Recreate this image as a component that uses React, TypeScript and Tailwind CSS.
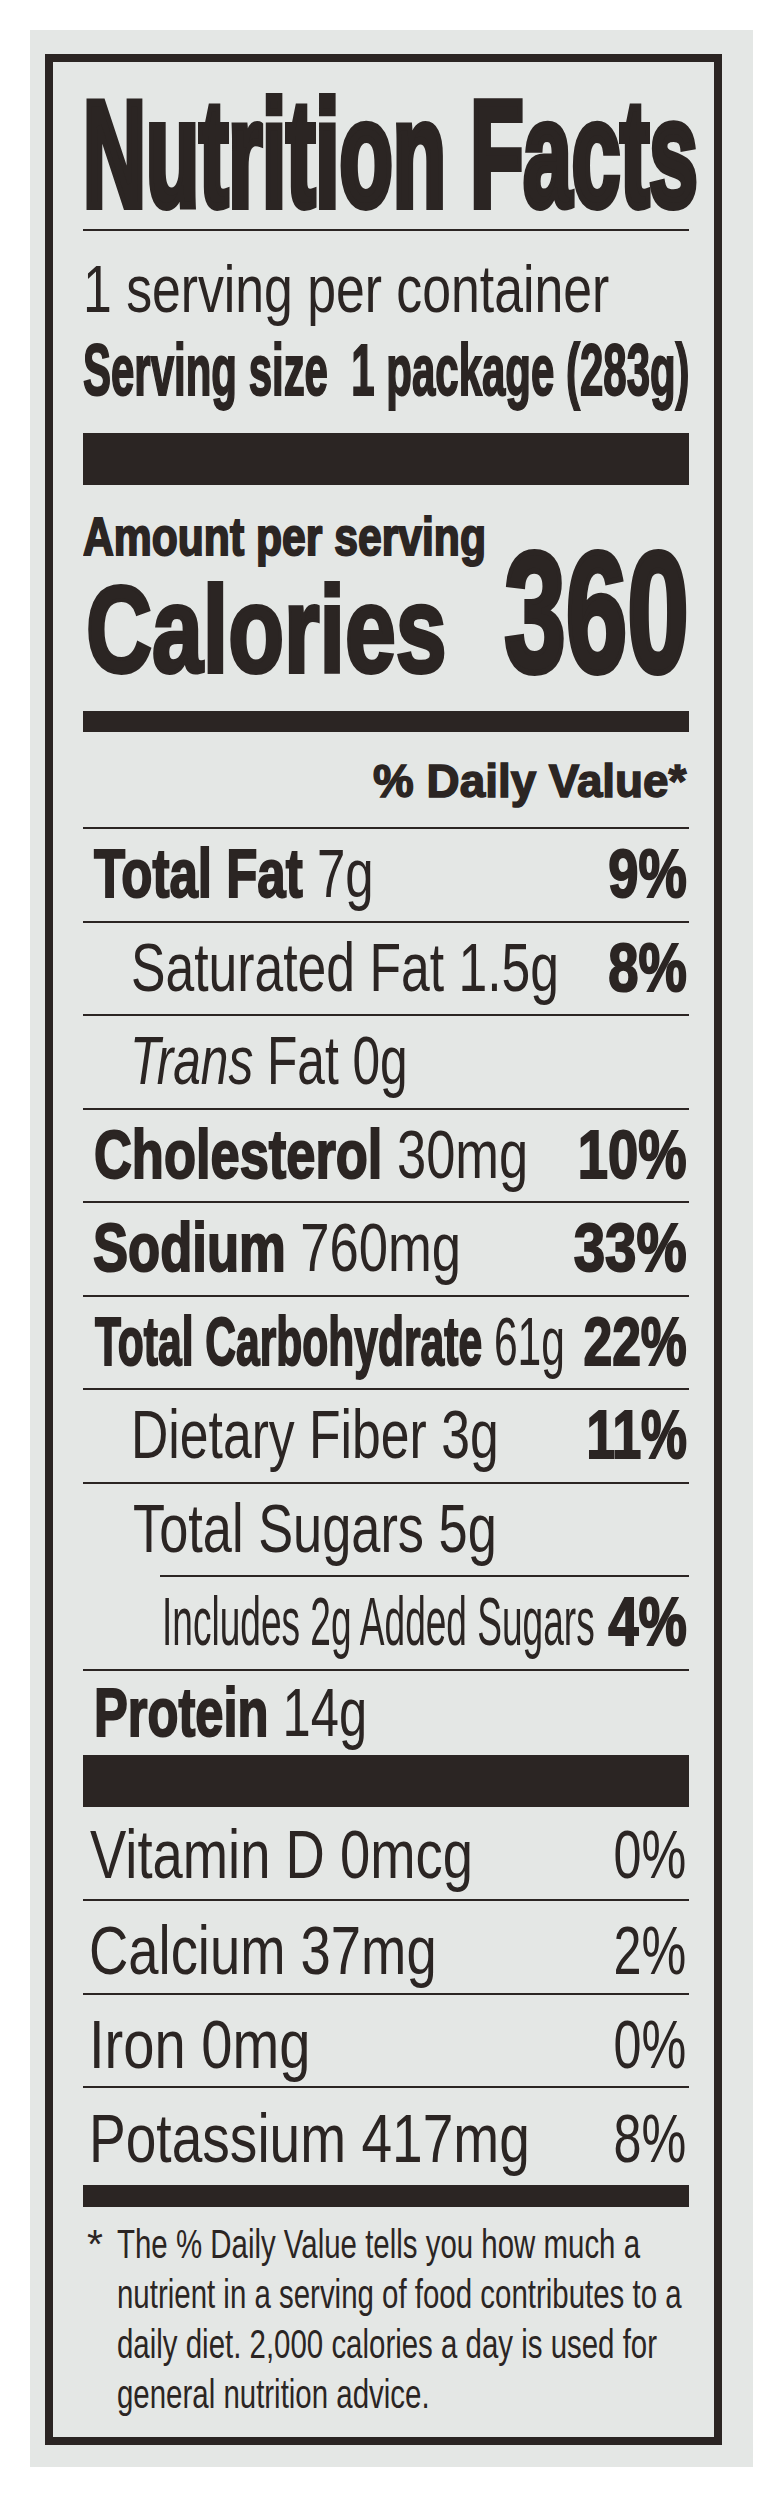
import React from "react";

type RowProps = {
  children: React.ReactNode;
  pct?: string;
  regularPct?: boolean;
  pctScale?: string;
  pad: string;
  squeeze: string;
  height?: string;
  top?: string;
};

const B = ({ children }: { children: React.ReactNode }) => (
  <span className="font-bold [-webkit-text-stroke:2px_#2b2523]">{children}</span>
);

const Rule = ({ indent }: { indent?: boolean }) => (
  <div className={indent ? "ml-[77px] h-[2px] bg-[#2b2523]" : "h-[2px] bg-[#2b2523]"} />
);

const Row = ({
  children,
  pct,
  regularPct,
  pctScale = "scale-x-[0.8]",
  pad,
  squeeze,
  height = "h-[91.5px]",
  top = "pt-[10px]",
}: RowProps) => (
  <div className={`flex items-start justify-between ${height} ${top} ${pad}`}>
    <span className={`block min-w-0 whitespace-nowrap origin-left ${squeeze}`}>{children}</span>
    {pct && (
      <span
        className={
          regularPct
            ? "shrink-0 whitespace-nowrap origin-right scale-x-[0.74] pr-[4px]"
            : `shrink-0 whitespace-nowrap origin-right pr-[3px] font-bold [-webkit-text-stroke:2px_#2b2523] ${pctScale}`
        }
      >
        {pct}
      </span>
    )}
  </div>
);

export default function App() {
  return (
    <div className="w-[784px] h-[2498px] bg-white pt-[30px] pl-[30px] font-['Liberation_Sans',Arial,sans-serif] text-[#2b2523]">
      <div className="w-[723px] h-[2437px] bg-[#e4e7e5] pt-[24px] pl-[15px]">
        <div className="w-[677px] h-[2391px] border-8 border-[#2b2523] pl-[30px] pr-[25px] text-[68px] leading-none">
          {/* Title */}
          <div className="h-[167px] pt-[16px]">
            <span className="block whitespace-nowrap origin-left scale-x-[0.577] text-[151px] font-bold [-webkit-text-stroke:8px_#2b2523]">
              Nutrition Facts
            </span>
          </div>
          <Rule />

          {/* Servings */}
          <div className="h-[202px] pt-[24px]">
            <span className="block whitespace-nowrap origin-left scale-x-[0.772] text-[67px]">1 serving per container</span>
            <span className="mt-[12px] block whitespace-nowrap origin-left scale-x-[0.583] text-[72px] font-bold [-webkit-text-stroke:2px_#2b2523]">
              Serving size&nbsp;&nbsp;1 package (283g)
            </span>
          </div>
          <div className="h-[52px] bg-[#2b2523]" />

          {/* Calories */}
          <div className="flex h-[226px] items-start pt-[24px]">
            <div className="flex flex-1 min-w-0 items-end justify-between">
              <div className="flex min-w-0 flex-1 flex-col">
                <span className="block whitespace-nowrap origin-left scale-x-[0.79] text-[54px] font-bold [-webkit-text-stroke:2px_#2b2523]">
                  Amount per serving
                </span>
                <span className="mt-[5px] block whitespace-nowrap origin-left scale-x-[0.743] pl-[4px] text-[123px] font-bold [-webkit-text-stroke:4px_#2b2523]">
                  Calories
                </span>
              </div>
              <span className="-mb-[6px] shrink-0 origin-right scale-x-[0.65] text-[170px] font-bold [-webkit-text-stroke:6px_#2b2523]">
                360
              </span>
            </div>
          </div>
          <div className="h-[21px] bg-[#2b2523]" />

          {/* Daily value header */}
          <div className="flex h-[95px] justify-end pt-[25px]">
            <span className="shrink-0 whitespace-nowrap origin-right scale-x-[0.975] pr-[3px] text-[47px] font-bold [-webkit-text-stroke:1.5px_#2b2523]">
              % Daily Value*
            </span>
          </div>
          <Rule />

          <Row pad="pl-[11px]" squeeze="scale-x-[0.75]" pct="9%">
            <B>Total Fat</B> 7g
          </Row>
          <Rule />
          <Row pad="pl-[48px]" squeeze="scale-x-[0.76]" pct="8%">
            Saturated Fat 1.5g
          </Row>
          <Rule />
          <Row pad="pl-[47px]" squeeze="scale-x-[0.73]">
            <i>Trans</i> Fat 0g
          </Row>
          <Rule />
          <Row pad="pl-[11px]" squeeze="scale-x-[0.771]" pct="10%">
            <B>Cholesterol</B> 30mg
          </Row>
          <Rule />
          <Row pad="pl-[10px]" squeeze="scale-x-[0.773]" pct="33%" pctScale="scale-x-[0.83]">
            <B>Sodium</B> 760mg
          </Row>
          <Rule />
          <Row pad="pl-[12px]" squeeze="scale-x-[0.626]" pct="22%" pctScale="scale-x-[0.76]">
            <B>Total Carbohydrate</B> 61g
          </Row>
          <Rule />
          <Row pad="pl-[48px]" squeeze="scale-x-[0.76]" pct="11%" pctScale="scale-x-[0.76]">
            Dietary Fiber 3g
          </Row>
          <Rule />
          <Row pad="pl-[50px]" squeeze="scale-x-[0.77]">
            Total Sugars 5g
          </Row>
          <Rule indent />
          <Row pad="pl-[79px]" squeeze="scale-x-[0.545]" pct="4%">
            Includes 2g Added Sugars
          </Row>
          <Rule />
          <Row pad="pl-[11px]" squeeze="scale-x-[0.745]" height="h-[84.5px]" top="pt-[7px]">
            <B>Protein</B> 14g
          </Row>
          <div className="h-[52px] bg-[#2b2523]" />

          {/* Vitamins and minerals */}
          <Row pad="pl-[7px]" squeeze="scale-x-[0.8]" pct="0%" regularPct height="h-[92px]" top="pt-[13px]">
            Vitamin D 0mcg
          </Row>
          <Rule />
          <Row pad="pl-[6px]" squeeze="scale-x-[0.8]" pct="2%" regularPct height="h-[92px]" top="pt-[15px]">
            Calcium 37mg
          </Row>
          <Rule />
          <Row pad="pl-[6px]" squeeze="scale-x-[0.825]" pct="0%" regularPct height="h-[91px]" top="pt-[15px]">
            Iron 0mg
          </Row>
          <Rule />
          <Row pad="pl-[6px]" squeeze="scale-x-[0.81]" pct="8%" regularPct height="h-[97px]" top="pt-[16px]">
            Potassium 417mg
          </Row>
          <div className="h-[22px] bg-[#2b2523]" />

          {/* Footnote */}
          <div className="flex pt-[12px] pl-[4px] text-[41px] leading-[50px]">
            <span className="w-[30px] shrink-0">*</span>
            <div className="flex min-w-0 flex-1 flex-col">
              <span className="block whitespace-nowrap origin-left scale-x-[0.718]">The % Daily Value tells you how much a</span>
              <span className="block whitespace-nowrap origin-left scale-x-[0.718]">nutrient in a serving of food contributes to a</span>
              <span className="block whitespace-nowrap origin-left scale-x-[0.718]">daily diet. 2,000 calories a day is used for</span>
              <span className="block whitespace-nowrap origin-left scale-x-[0.718]">general nutrition advice.</span>
            </div>
          </div>
        </div>
      </div>
    </div>
  );
}
